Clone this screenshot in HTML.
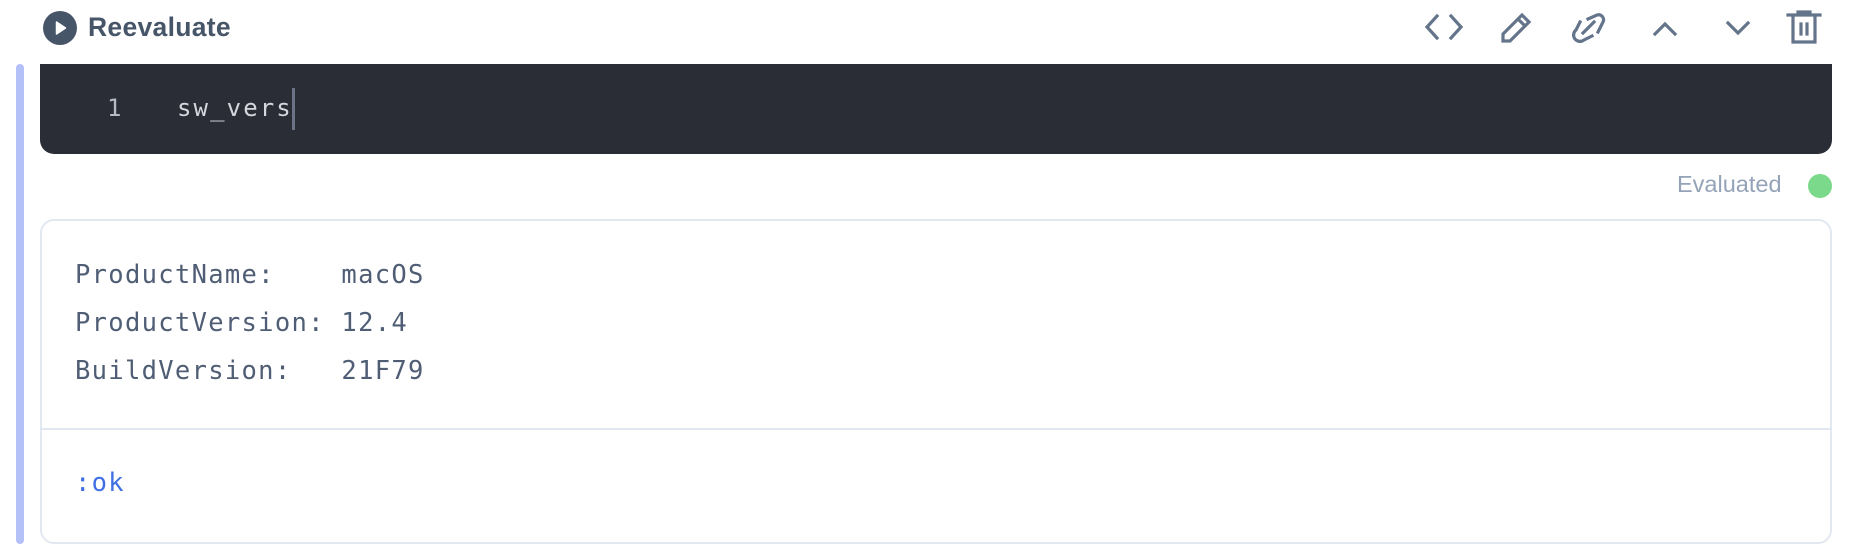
<!DOCTYPE html>
<html><head><meta charset="utf-8"><style>
*{margin:0;padding:0;box-sizing:border-box}
body{width:1850px;height:560px;background:#fff;position:relative;overflow:hidden;font-family:"Liberation Sans",sans-serif}
.abs{position:absolute}
.mono{font-family:"DejaVu Sans Mono","Liberation Mono",monospace}
</style></head><body>
<svg class="abs" style="left:42px;top:10px" width="36" height="36" viewBox="0 0 36 36"><circle cx="18" cy="18" r="17" fill="#475569"/><path d="M14.5 12 L23.5 18 L14.5 24 Z" fill="#fff" stroke="#fff" stroke-width="1.5" stroke-linejoin="round"/></svg>
<div class="abs" style="left:88px;top:12px;font-size:26.5px;font-weight:bold;color:#475569;letter-spacing:0.3px">Reevaluate</div>

<svg class="abs" style="left:1410px;top:0" width="440" height="60" viewBox="1410 0 440 60" fill="none" stroke="#64748b" stroke-width="3.2" stroke-linecap="square">
<path d="M1437 16 L1427 27 L1437 38 M1451 16 L1461 27 L1451 38"/>
<path d="M1503 41 L1503 34 L1522 15 L1529 22 L1510 41 Z M1518 19 L1525 26"/>
<path d="M1588 19 L1597 15 A5 5 0 0 1 1603 22 L1598 32 M1580 22 L1576 30 A6 6 0 0 0 1584 40 L1592 36 M1583 33 L1594 22"/>
<path d="M1655 34 L1665 24 L1675 34"/>
<path d="M1728 23 L1738 33 L1748 23"/>
<path d="M1788 15 L1820 15 M1798 15 L1798 12 L1810 12 L1810 15 M1793 16 L1793 42 L1815 42 L1815 16 M1801 24 L1801 34 M1807 24 L1807 34"/>
</svg>

<div class="abs" style="left:16px;top:64px;width:8px;height:480px;background:#b4c0f8;border-radius:4px"></div>

<div class="abs" style="left:40px;top:64px;width:1792px;height:90px;background:#2a2d35;border-radius:0 0 14px 14px"></div>
<div class="abs mono" style="left:107px;top:94px;font-size:24px;color:#b5bac4">1</div>
<div class="abs mono" style="left:177px;top:94px;font-size:24px;color:#d4d7de;letter-spacing:2.1px">sw_vers</div>
<div class="abs" style="left:292px;top:88px;width:3px;height:42px;background:#6b7487"></div>

<div class="abs" style="left:1677px;top:171px;font-size:23.5px;color:#94a3b8">Evaluated</div>
<div class="abs" style="left:1808px;top:174px;width:24px;height:24px;border-radius:50%;background:#7ad98a"></div>

<div class="abs" style="left:40px;top:219px;width:1792px;height:325px;border:2px solid #e2e8f0;border-radius:14px"></div>
<div class="abs" style="left:41px;top:428px;width:1790px;height:2px;background:#e2e8f0"></div>
<pre class="abs mono" style="left:75px;top:251px;font-size:25.5px;line-height:48px;color:#4f5d75;letter-spacing:1.3px">ProductName:    macOS
ProductVersion: 12.4
BuildVersion:   21F79</pre>
<div class="abs mono" style="left:75px;top:468px;font-size:25.5px;color:#3f6fe3;letter-spacing:1.3px">:ok</div>
</body></html>
